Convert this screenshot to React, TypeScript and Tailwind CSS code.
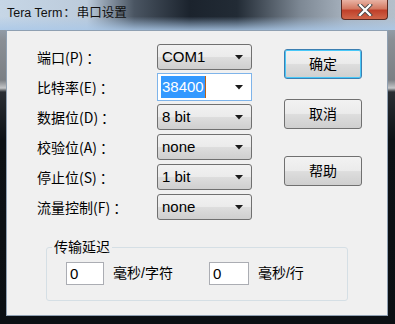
const font = "font-['Liberation_Sans','Noto_Sans_CJK_SC',sans-serif]";
const cjk = "font-['Noto_Sans_CJK_SC',sans-serif]";

const Arrow = () => (
  <svg width="8" height="5" viewBox="0 0 8 5" className="shrink-0">
    <path d="M0 0 H8 L4 4.5 Z" fill="#1a1a1a" />
  </svg>
);

const Combo = ({ value }: { value: string }) => (
  <div className="h-[26px] w-[95px] flex items-center justify-between pl-[4px] pr-[8px] rounded-[3px] border border-[#707070] bg-[linear-gradient(180deg,#f2f2f2_0%,#ebebeb_48%,#dddddd_52%,#cfcfcf_100%)] text-[15px] text-black">
    <span>{value}</span>
    <Arrow />
  </div>
);

const EditCombo = ({ value }: { value: string }) => (
  <div className="h-[28px] w-[95px] flex items-center justify-between pl-[3px] pr-[8px] border border-[#7eb4ea] bg-white text-[15px]">
    <span className="flex items-center h-[22px]">
      <span className="bg-[#3399ff] text-white px-px leading-[22px]">{value}</span>
      <span className="w-px h-[22px] bg-[#c06010]" />
    </span>
    <Arrow />
  </div>
);

const Btn = ({ label, primary }: { label: string; primary?: boolean }) => (
  <div
    className={
      "h-[30px] w-[78px] flex items-center justify-center rounded-[3px] border bg-[linear-gradient(180deg,#f2f2f2_0%,#ebebeb_48%,#dddddd_52%,#cfcfcf_100%)] text-[14px] text-black " +
      (primary ? "border-[#3c7fb1] shadow-[inset_0_0_0_1px_#48c8f8]" : "border-[#707070]")
    }
  >
    {label}
  </div>
);

const rows: { label: string; key: string; value: string; edit?: boolean }[] = [
  { label: "端口", key: "P", value: "COM1" },
  { label: "比特率", key: "E", value: "38400", edit: true },
  { label: "数据位", key: "D", value: "8 bit" },
  { label: "校验位", key: "A", value: "none" },
  { label: "停止位", key: "S", value: "1 bit" },
  { label: "流量控制", key: "F", value: "none" },
];

export default function App() {
  return (
    <div
      className={
        "w-[395px] h-[324px] flex flex-col overflow-hidden relative bg-[linear-gradient(180deg,#a9c3dc_0px,#8a8f95_40px,#7b7f84_80px,#c4c6c8_88px,#2a2e33_92px,#0d1115_140px,#0b0f13_100%)] " +
        font
      }
    >
      {/* title bar */}
      <div className="h-[30px] shrink-0 flex items-center pl-[7px] pb-[4px] bg-[linear-gradient(180deg,rgba(255,255,255,0)_55%,rgba(170,200,232,0.85)_100%),linear-gradient(90deg,#c6d6e6_0%,#bccbdb_22%,#4a5562_34%,#1b232d_48%,#222b35_60%,#7d8894_76%,#a8b3bf_88%,#b4bfca_100%)]">
        <span className="text-[12.5px] text-[#111]">
          Tera Term<span className="mx-[1px]">：</span>串口设置
        </span>
      </div>
      <div className="absolute top-0 right-[7px] w-[47px] h-[20px] rounded-b-[4px] border border-t-0 border-[#5a2a22] bg-[linear-gradient(180deg,#e9b3a4_0%,#d37a63_45%,#c0402a_55%,#d0664a_100%)] flex items-center justify-center">
        <svg width="16" height="12" viewBox="0 0 16 12">
          <path d="M3 1 L13 11 M13 1 L3 11" stroke="#4a4a4a" strokeWidth="4" strokeLinecap="square" />
          <path d="M3 1 L13 11 M13 1 L3 11" stroke="#ffffff" strokeWidth="2.2" strokeLinecap="square" />
        </svg>
      </div>

      <div className="flex flex-1 min-h-0">
        <div className="w-[6px] shrink-0" />
        {/* client */}
        <div className="flex-1 flex flex-col border border-[#8fa0b2] bg-[#f0f0f0] text-[14px] text-black">
          <div className="flex pt-[13px]">
            <div className="grid grid-cols-[120px_95px] gap-y-[4px] pl-[30px] items-center">
              {rows.map((r) => (
                <div key={r.key} className="contents">
                  <div className={"h-[26px] flex items-center " + cjk}>
                    {r.label}({r.key})<span className="ml-[3px]">：</span>
                  </div>
                  {r.edit ? (
                    <div className="h-[26px] flex items-center">
                      <EditCombo value={r.value} />
                    </div>
                  ) : (
                    <Combo value={r.value} />
                  )}
                </div>
              ))}
            </div>
            <div className="flex flex-col pl-[32px] pt-[5px]">
              <Btn label="确定" primary />
              <div className="mt-[20px]">
                <Btn label="取消" />
              </div>
              <div className="mt-[27px]">
                <Btn label="帮助" />
              </div>
            </div>
          </div>

          {/* group box */}
          <div className="relative ml-[39px] mt-[27px] w-[302px] h-[54px] rounded-[3px] border border-[#d5dfe5]">
            <span className="absolute -top-[11px] left-[5px] px-[2px] bg-[#f0f0f0] leading-[20px]">传输延迟</span>
            <div className="flex items-center pt-[14px] pl-[19px]">
              <div className="w-[38px] h-[23px] border border-[#abadb3] bg-white pl-[3px] leading-[21px] text-[15px]">0</div>
              <span className="ml-[9px]">毫秒/字符</span>
              <div className="ml-[36px] w-[40px] h-[23px] border border-[#abadb3] bg-white pl-[3px] leading-[21px] text-[15px]">0</div>
              <span className="ml-[9px]">毫秒/行</span>
            </div>
          </div>
        </div>
        <div className="w-[7px] shrink-0" />
      </div>
      <div className="h-[8px] shrink-0" />
    </div>
  );
}
